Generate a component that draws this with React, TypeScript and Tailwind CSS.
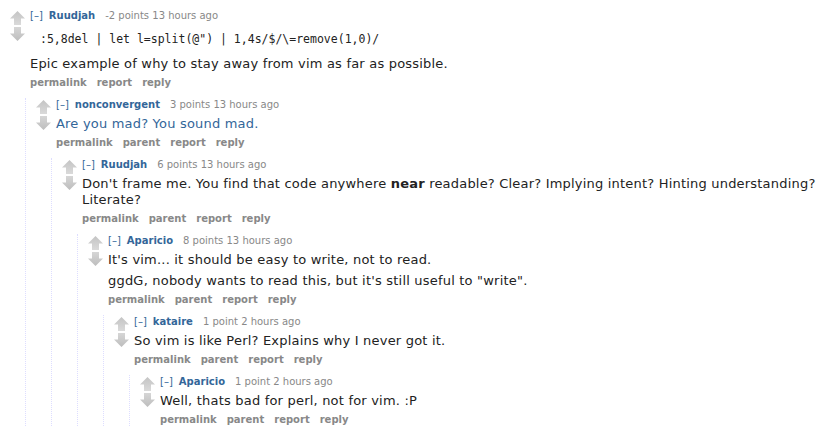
import React from 'react'

function Arrow({ down }: { down?: boolean }) {
  return (
    <svg width="15" height="14" viewBox="0 0 15 14" className="block">
      <defs>
        <linearGradient id={down ? 'gd' : 'gu'} x1="0" y1="0" x2="0" y2="1">
          <stop offset="0" stopColor={down ? '#d6d6d6' : '#c4c4c4'} />
          <stop offset="1" stopColor={down ? '#bdbdbd' : '#dadada'} />
        </linearGradient>
      </defs>
      <polygon
        points={down ? '4,0 11,0 11,6.5 15,6.5 7.5,14 0,6.5 4,6.5' : '7.5,0 15,7.5 11,7.5 11,14 4,14 4,7.5 0,7.5'}
        fill={`url(#${down ? 'gd' : 'gu'})`}
      />
    </svg>
  )
}

interface CommentProps {
  author: string
  points: string
  time: string
  parent?: boolean
  blue?: boolean
  body: React.ReactNode
  children?: React.ReactNode
}

function Comment({ author, points, time, parent = true, blue, body, children }: CommentProps) {
  return (
    <div>
      <div className="flex">
        <div className="w-[30px] shrink-0 pl-[10px] pt-[2px]">
          <Arrow />
          <div className="mt-[2px]">
            <Arrow down />
          </div>
        </div>
        <div className="min-w-0 flex-1 pr-1">
          <div className="text-[10px] leading-[14px] text-[#888]">
            <span className="text-[#369]">[–]</span>
            <span className="ml-[6px] font-bold text-[#369]">{author}</span>
            <span className="ml-[10px]">{points}</span> {time}
          </div>
          <div
            className={`mt-[4px] text-[13px] leading-[16px] tracking-[0.2px] ${blue ? 'text-[#336699]' : 'text-[#222]'}`}
          >
            {body}
          </div>
          <ul className="mt-[5px] flex gap-[10px] text-[10px] font-bold leading-[12px] text-[#888]">
            <li>permalink</li>
            {parent && <li>parent</li>}
            <li>report</li>
            <li>reply</li>
          </ul>
        </div>
      </div>
      {children && (
        <div className="ml-[25px] mt-[9px] border-l border-dotted border-[#ddf]">{children}</div>
      )}
    </div>
  )
}

export default function App() {
  return (
    <div className="h-[431px] w-[829px] overflow-hidden bg-white pt-[9px] font-['DejaVu_Sans',Verdana,sans-serif]">
      <Comment
        author="Ruudjah"
        points="-2 points"
        time="13 hours ago"
        parent={false}
        body={
          <>
            <pre className="mb-[10px] mt-[9px] pl-[10px] font-['DejaVu_Sans_Mono',monospace] text-[11.5px] leading-[14px] tracking-normal text-[#222]">
              :5,8del | let l=split(@&quot;) | 1,4s/$/\=remove(1,0)/
            </pre>
            <p>Epic example of why to stay away from vim as far as possible.</p>
          </>
        }
      >
        <Comment
          author="nonconvergent"
          points="3 points"
          time="13 hours ago"
          blue
          body={<p>Are you mad? You sound mad.</p>}
        >
          <Comment
            author="Ruudjah"
            points="6 points"
            time="13 hours ago"
            body={
              <p>
                Don't frame me. You find that code anywhere <strong>near</strong> readable? Clear? Implying intent?
                Hinting understanding? Literate?
              </p>
            }
          >
            <Comment
              author="Aparicio"
              points="8 points"
              time="13 hours ago"
              body={
                <>
                  <p className="mb-[5px]">It's vim... it should be easy to write, not to read.</p>
                  <p>ggdG, nobody wants to read this, but it's still useful to "write".</p>
                </>
              }
            >
              <Comment
                author="kataire"
                points="1 point"
                time="2 hours ago"
                body={<p>So vim is like Perl? Explains why I never got it.</p>}
              >
                <Comment
                  author="Aparicio"
                  points="1 point"
                  time="2 hours ago"
                  body={<p>Well, thats bad for perl, not for vim. :P</p>}
                />
              </Comment>
            </Comment>
          </Comment>
        </Comment>
      </Comment>
    </div>
  )
}
